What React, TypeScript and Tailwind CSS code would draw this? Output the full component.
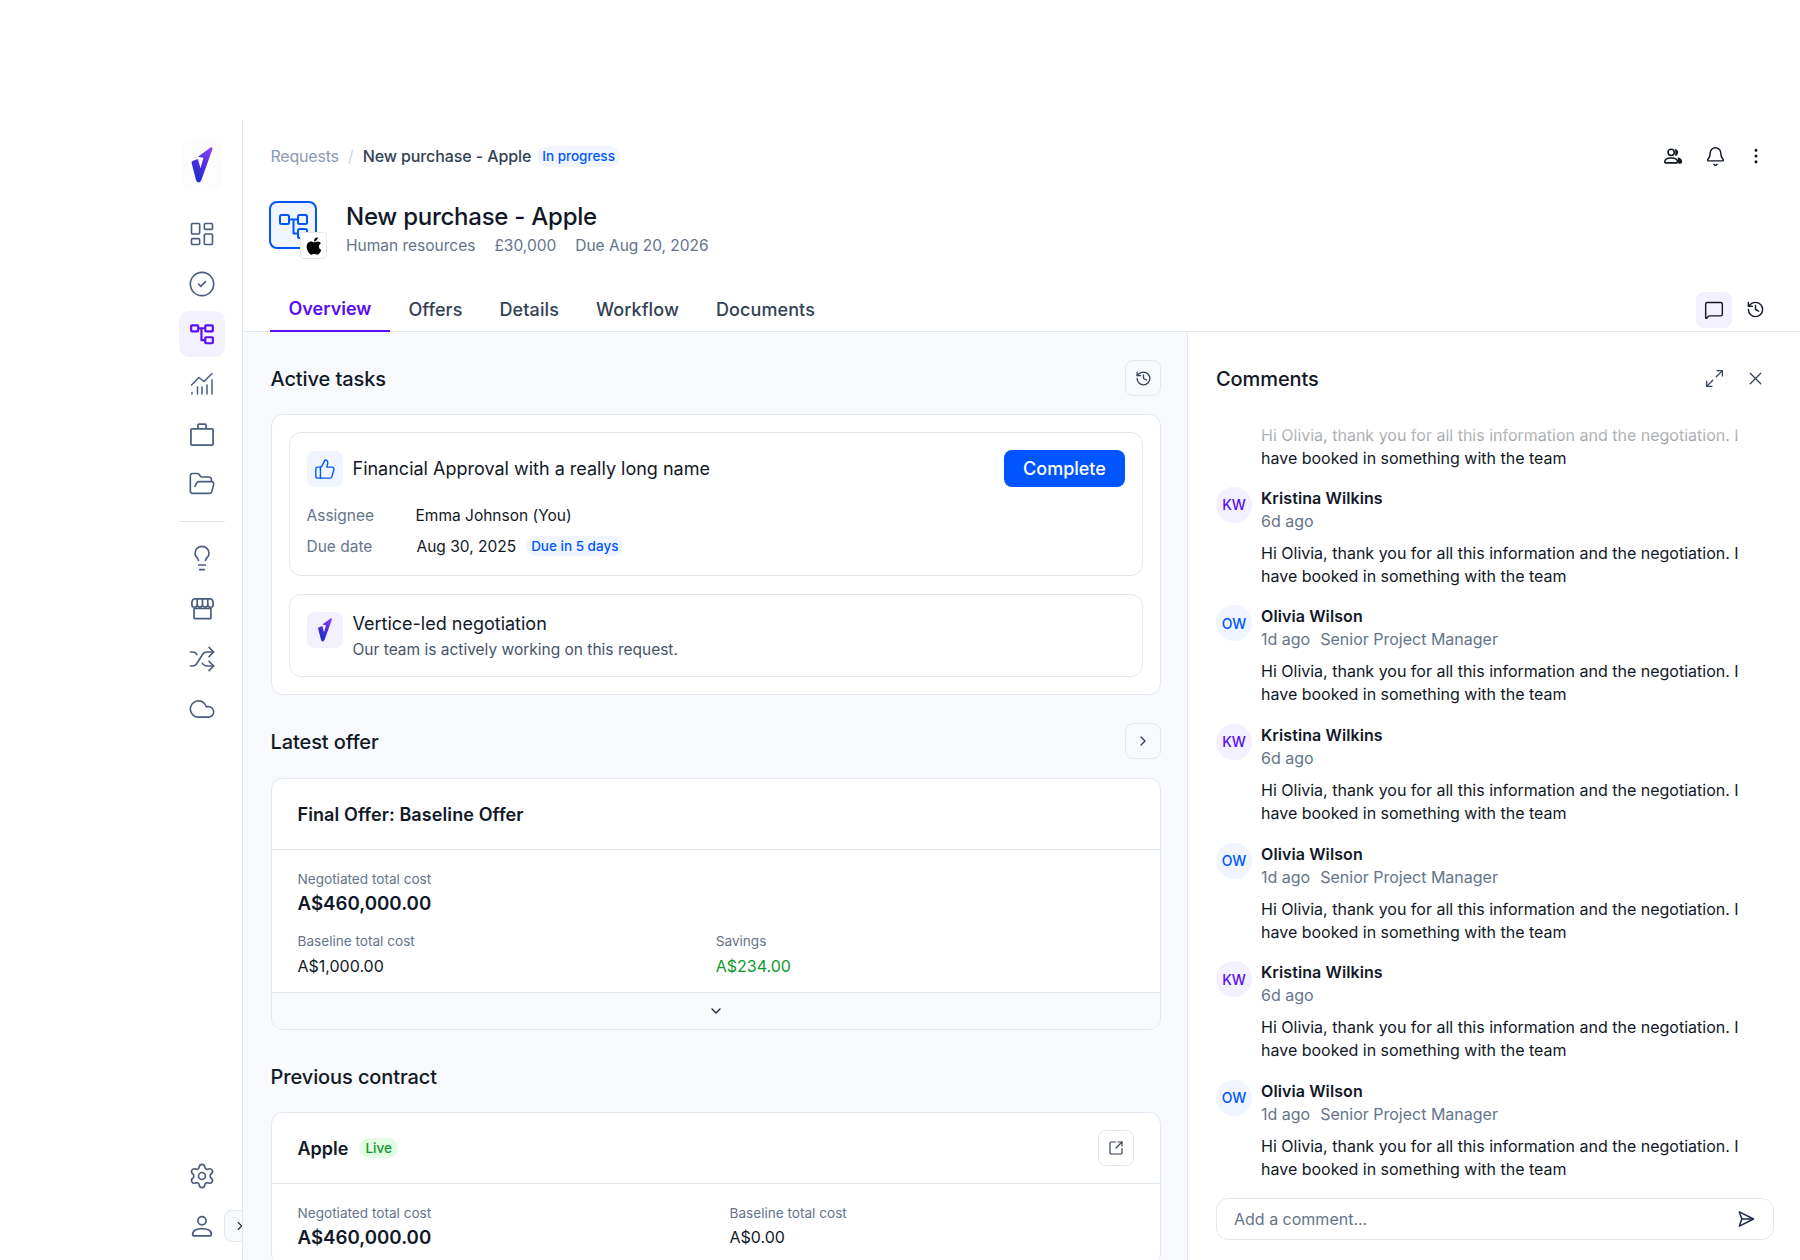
import type { ReactNode } from "react";
import {
  Bell,
  ChevronDown,
  ChevronRight,
  CircleCheck,
  Cloud,
  EllipsisVertical,
  FolderOpen,
  History,
  LayoutDashboard,
  Lightbulb,
  Maximize2,
  MessageSquare,
  Settings,
  Shuffle,
  SquareArrowOutUpRight,
  ThumbsUp,
  X,
} from "lucide-react";
import { FaApple } from "react-icons/fa";

function WorkflowIcon({ className }: { className?: string }) {
  return (
    <svg viewBox="0 0 24 24" fill="none" stroke="currentColor" strokeWidth="2" strokeLinejoin="round" className={className}>
      <rect x="2" y="4" width="6.5" height="5.5" rx="0.8" />
      <rect x="15" y="4" width="7" height="5.5" rx="0.8" />
      <rect x="15" y="15" width="7" height="5.5" rx="0.8" />
      <path d="M8.5 6.7H15M11.5 6.7V17.7H15" />
    </svg>
  );
}

function RequestIcon({ className }: { className?: string }) {
  return (
    <svg viewBox="0 0 30 28" fill="none" stroke="currentColor" strokeWidth="2" strokeLinejoin="round" className={className}>
      <rect x="1" y="2" width="9" height="9" rx="1.500" />
      <rect x="19" y="2" width="9" height="9" rx="1.500" />
      <rect x="19" y="16" width="9" height="9" rx="1.500" />
      <path d="M10 6.500H19M14.500 6.500V20.500H19" />
    </svg>
  );
}

function ChartIcon({ className }: { className?: string }) {
  return (
    <svg viewBox="0 0 24 24" fill="none" stroke="currentColor" strokeWidth="1.5" strokeLinecap="round" strokeLinejoin="round" className={className}>
      <path d="M1.500 13L9 5.500l5 4 8-8" />
      <path d="M2 22v-1.500M7.500 22v-7M12 22v-7M17 22v-9M22 22V8" />
    </svg>
  );
}

function CaseIcon({ className }: { className?: string }) {
  return (
    <svg viewBox="0 0 24 24" fill="none" stroke="currentColor" strokeWidth="1.5" strokeLinejoin="round" className={className}>
      <rect x="2.500" y="7.500" width="19" height="14" rx="1" />
      <path d="M8.500 7.500V4.500a1 1 0 0 1 1-1h5a1 1 0 0 1 1 1v3" />
    </svg>
  );
}

function ShopIcon({ className }: { className?: string }) {
  return (
    <svg viewBox="0 0 24 24" fill="none" stroke="currentColor" strokeWidth="1.5" strokeLinejoin="round" className={className}>
      <path d="M4.500 11.500V20.500a.5.5 0 0 0 .5.5h14a.5.5 0 0 0 .5-.5V11.500" />
      <path d="M5 3.500h14c1.500 0 2.500 2 2.500 5a2.400 2.400 0 0 1-4.800 0 2.350 2.350 0 0 1-4.700 0 2.350 2.350 0 0 1-4.700 0 2.400 2.400 0 0 1-4.800 0c0-3 1-5 2.500-5z" />
      <path d="M7.300 3.500v5M12 3.500v5M16.700 3.500v5M4.500 12h15" />
    </svg>
  );
}

function PersonIcon({ className }: { className?: string }) {
  return (
    <svg viewBox="0 0 24 24" fill="none" stroke="currentColor" strokeWidth="1.5" strokeLinejoin="round" className={className}>
      <circle cx="12" cy="7.500" r="3.500" />
      <path d="M4 19c0-3 3.500-4.800 8-4.800s8 1.800 8 4.800c0 1-.7 1.500-1.800 1.500H5.800C4.700 20.500 4 20 4 19z" />
    </svg>
  );
}

function PeopleIcon({ className }: { className?: string }) {
  return (
    <svg viewBox="0 0 24 24" fill="none" stroke="currentColor" strokeWidth="1.7" strokeLinejoin="round" className={className}>
      <circle cx="10" cy="8" r="3.400" />
      <path d="M3 18.500c0-2.800 3-4.300 7-4.300s7 1.500 7 4.300c0 .7-.5 1-1.200 1H4.200c-.7 0-1.200-.3-1.200-1z" />
      <path d="M14.500 4.800a3.400 3.400 0 0 1 0 6.400M18 14.500c2 .6 3.200 2 3.200 4 0 .7-.5 1-1.200 1h-1.500z" fill="currentColor" />
    </svg>
  );
}

function SendIcon({ className }: { className?: string }) {
  return (
    <svg viewBox="0 0 24 24" fill="none" stroke="currentColor" strokeWidth="1.8" strokeLinejoin="round" className={className}>
      <path d="M4 3.500L21 12 4 20.500 7 12z" />
      <path d="M7 12h14" />
    </svg>
  );
}

function Logo({ className, id }: { className?: string; id: string }) {
  return (
    <svg viewBox="0 0 65 110" className={className}>
      <defs>
        <linearGradient id={id} x1="0.8" y1="0" x2="0.3" y2="1">
          <stop offset="0" stopColor="#8b3ff5" />
          <stop offset="0.5" stopColor="#4a2fe0" />
          <stop offset="1" stopColor="#1a2fc4" />
        </linearGradient>
      </defs>
      <path
        d="M60 1Q66 0 64 8L30 102Q26 110 20 108Q16 106 14 100L1 50Q-1 44 5 42L20 37L28 65L37 33L20 30Z"
        fill={`url(#${id})`}
      />
    </svg>
  );
}

function NavItem({ children, active }: { children: ReactNode; active?: boolean }) {
  return (
    <div
      className={`flex h-[46px] w-[46px] items-center justify-center rounded-[10px] ${
        active ? "bg-[#f3f0ff] text-[#5a0ff0]" : "text-[#4a5d7c]"
      }`}
    >
      {children}
    </div>
  );
}

function Sidebar() {
  const icon = "h-[28px] w-[28px]";
  return (
    <aside className="relative flex h-full w-[64px] shrink-0 flex-col border-r border-[#e2e8f0] pr-[17px]">
      <div className="mx-auto mt-[19px] flex h-[52px] w-[40px] items-center justify-center rounded-xl bg-[#fcfcfd]">
        <Logo id="logo-main" className="h-[36px] w-[22px]" />
      </div>
      <nav className="mt-[20px] flex flex-col gap-[4px]">
        <NavItem><LayoutDashboard className={icon} strokeWidth={1.4} /></NavItem>
        <NavItem><CircleCheck className={icon} strokeWidth={1.4} /></NavItem>
        <NavItem active><WorkflowIcon className="h-[26px] w-[26px]" /></NavItem>
        <NavItem><ChartIcon className="h-[24px] w-[24px]" /></NavItem>
        <NavItem><CaseIcon className="h-[28px] w-[28px]" /></NavItem>
        <NavItem><FolderOpen className={icon} strokeWidth={1.4} /></NavItem>
      </nav>
      <div className="mt-[14px] mb-[13px] h-px bg-[#e2e8f0]" />
      <nav className="flex flex-col gap-[4.300px]">
        <NavItem><Lightbulb className={icon} strokeWidth={1.4} /></NavItem>
        <NavItem><ShopIcon className="h-[27px] w-[27px]" /></NavItem>
        <NavItem><Shuffle className={icon} strokeWidth={1.4} /></NavItem>
        <NavItem><Cloud className={icon} strokeWidth={1.4} /></NavItem>
      </nav>
      <nav className="mt-auto mb-[11px] flex flex-col gap-1">
        <NavItem><Settings className={icon} strokeWidth={1.4} /></NavItem>
        <NavItem><PersonIcon className={icon} /></NavItem>
      </nav>
      <div className="absolute right-0 bottom-[18px] flex h-[32px] w-[18px] items-center justify-end overflow-hidden rounded-l-lg border border-r-0 border-[#e2e8f0] bg-[#f8f9fc] text-[#1f2a44]">
        <ChevronRight className="mr-[-5px] h-[14px] w-[14px] shrink-0" />
      </div>
    </aside>
  );
}

function IconBox({ children, className = "" }: { children: ReactNode; className?: string }) {
  return (
    <div className={`flex h-9 w-9 items-center justify-center rounded-lg ${className}`}>{children}</div>
  );
}

function SectionHead({ title, children }: { title: string; children?: ReactNode }) {
  return (
    <div className="flex h-9 items-center justify-between">
      <h2 className="pt-[2px] text-[20px] font-medium tracking-[-0.1px] text-[#111827]">{title}</h2>
      {children && (
        <div className="flex h-9 w-9 items-center justify-center rounded-lg border border-[#e2e8f0] text-[#334155]">
          {children}
        </div>
      )}
    </div>
  );
}

function Metric({ label, value, strong, green }: { label: string; value: string; strong?: boolean; green?: boolean }) {
  return (
    <div>
      <div className="text-[13.600px] leading-[20px] text-[#64748b]">{label}</div>
      <div
        className={
          strong
            ? "pt-[1px] text-[18.700px] leading-[27px] font-semibold text-[#111827]"
            : `mt-[3px] text-[16px] leading-[24px] ${green ? "text-[#0a9a2a]" : "text-[#111827]"}`
        }
      >
        {value}
      </div>
    </div>
  );
}

function TasksPanel() {
  return (
    <div className="h-full w-[945px] shrink-0 overflow-hidden border-r border-[#e2e8f0] bg-[#f8f9fc] pt-[28px] pr-[26px] pl-[27.500px]">
      <SectionHead title="Active tasks">
        <History className="h-[17px] w-[17px]" strokeWidth={1.8} />
      </SectionHead>
      <div className="mt-[18px] flex flex-col gap-[18px] rounded-xl border border-[#e2e8f0] bg-white p-[17px]">
        <div className="h-[144px] rounded-xl border border-[#e2e8f0] px-[17px] pt-[17px]">
          <div className="flex items-center">
            <IconBox className="bg-[#f0f5ff] text-[#0055ff]">
              <ThumbsUp className="h-[22px] w-[22px]" strokeWidth={1.5} />
            </IconBox>
            <span className="ml-[10px] text-[18px] text-[#111827]">Financial Approval with a really long name</span>
            <button className="ml-auto h-[37px] w-[121px] rounded-lg bg-[#0055ff] text-[18px] font-medium text-white">
              Complete
            </button>
          </div>
          <div className="mt-[17px] flex h-[24px] items-center text-[15.500px]">
            <span className="w-[109px] text-[#64748b]">Assignee</span>
            <span className="text-[#111827]">Emma Johnson (You)</span>
          </div>
          <div className="mt-[6.500px] flex h-[24px] items-center text-[15.500px]">
            <span className="w-[110px] text-[#64748b]">Due date</span>
            <span className="text-[#111827]">Aug 30, 2025</span>
            <span className="mb-[2px] ml-[10px] rounded-full bg-[#f0f5ff] px-[5px] text-[13.500px] leading-[20px] font-medium text-[#0055ff]">
              Due in 5 days
            </span>
          </div>
        </div>
        <div className="flex h-[83px] rounded-xl border border-[#e2e8f0] px-[17px] pt-[17px]">
          <IconBox className="bg-[#f3f0ff]">
            <Logo id="logo-task" className="h-[24px] w-[14px]" />
          </IconBox>
          <div className="ml-[10px]">
            <div className="text-[18px] leading-[24px] text-[#111827]">Vertice-led negotiation</div>
            <div className="mt-[2px] text-[15.500px] leading-[24px] text-[#475569]">Our team is actively working on this request.</div>
          </div>
        </div>
      </div>

      <div className="mt-[28px]">
        <SectionHead title="Latest offer">
          <ChevronRight className="h-4 w-4" />
        </SectionHead>
      </div>
      <div className="mt-[19px] overflow-hidden rounded-xl border border-[#e2e8f0] bg-white">
        <div className="flex h-[71px] items-center border-b border-[#e2e8f0] px-[26px] text-[18px] font-semibold tracking-[0.1px] text-[#111827]">
          Final Offer: Baseline Offer
        </div>
        <div className="px-[26px] pt-[19px] pb-[14px]">
          <Metric label="Negotiated total cost" value="A$460,000.00" strong />
          <div className="mt-[14px] grid grid-cols-2">
            <Metric label="Baseline total cost" value="A$1,000.00" />
            <Metric label="Savings" value="A$234.00" green />
          </div>
        </div>
        <div className="flex h-[37px] items-center justify-center border-t border-[#e2e8f0] bg-[#f8f9fc] text-[#1f2a44]">
          <ChevronDown className="h-4 w-4" />
        </div>
      </div>

      <div className="mt-[28px]">
        <SectionHead title="Previous contract" />
      </div>
      <div className="mt-[18px] rounded-xl border border-[#e2e8f0] bg-white">
        <div className="flex h-[71px] items-center border-b border-[#e2e8f0] px-[26px]">
          <span className="text-[18px] font-semibold text-[#111827]">Apple</span>
          <span className="ml-[11px] rounded-full bg-[#e2fbe2] px-[6px] text-[13.500px] leading-[20px] font-medium text-[#0a9a2a]">
            Live
          </span>
          <div className="ml-auto flex h-9 w-9 items-center justify-center rounded-lg border border-[#e2e8f0] text-[#334155]">
            <SquareArrowOutUpRight className="h-4 w-4" strokeWidth={1.8} />
          </div>
        </div>
        <div className="grid grid-cols-[432px_1fr] px-[26px] pt-[19px] pb-[14px]">
          <Metric label="Negotiated total cost" value="A$460,000.00" strong />
          <div>
            <div className="text-[13.600px] leading-[20px] text-[#64748b]">Baseline total cost</div>
            <div className="text-[16px] leading-[28px] text-[#111827]">A$0.00</div>
          </div>
        </div>
      </div>
    </div>
  );
}

const BODY_TEXT = "Hi Olivia, thank you for all this information and the negotiation. I have booked in something with the team";

const comments = [
  { initials: "KW", name: "Kristina Wilkins", age: "6d ago", role: "" },
  { initials: "OW", name: "Olivia Wilson", age: "1d ago", role: "Senior Project Manager" },
  { initials: "KW", name: "Kristina Wilkins", age: "6d ago", role: "" },
  { initials: "OW", name: "Olivia Wilson", age: "1d ago", role: "Senior Project Manager" },
  { initials: "KW", name: "Kristina Wilkins", age: "6d ago", role: "" },
  { initials: "OW", name: "Olivia Wilson", age: "1d ago", role: "Senior Project Manager" },
];

function CommentsPanel() {
  return (
    <div className="flex h-full min-w-0 flex-1 flex-col bg-white pr-[26px] pl-[28px]">
      <div className="flex h-[92px] shrink-0 items-center justify-between">
        <h2 className="pt-[1px] text-[20px] font-medium tracking-[-0.1px] text-[#111827]">Comments</h2>
        <div className="flex items-center gap-[20px] pr-[8.500px] text-[#334155]">
          <Maximize2 className="h-[21px] w-[21px]" strokeWidth={1.5} />
          <X className="h-[21px] w-[21px]" strokeWidth={1.5} />
        </div>
      </div>
      <div className="relative flex flex-col gap-[17.700px]">
        <p className="mb-[-1.200px] ml-[45px] w-[490px] text-[16px] leading-[23px] text-[#111827]">{BODY_TEXT}</p>
        <div className="absolute top-0 left-0 h-[24px] w-full bg-gradient-to-b from-white/80 to-white/50" />
        {comments.map((c, i) => (
          <div key={i} className="flex gap-[9px]">
            <div
              className={`flex h-9 w-9 shrink-0 items-center justify-center rounded-full text-[14px] font-medium ${
                c.initials === "KW" ? "bg-[#f3f0ff] text-[#5a0ff0]" : "bg-[#f0f5ff] text-[#0055ff]"
              }`}
            >
              {c.initials}
            </div>
            <div className="w-[490px]">
              <div className="text-[16px] leading-[23px] font-semibold tracking-[0.1px] text-[#111827]">{c.name}</div>
              <div className="flex gap-[10px] text-[16px] leading-[23px] text-[#64748b]">
                <span>{c.age}</span>
                {c.role && <span>{c.role}</span>}
              </div>
              <p className="mt-[9px] text-[16px] leading-[23px] text-[#111827]">{BODY_TEXT}</p>
            </div>
          </div>
        ))}
      </div>
      <div className="mt-auto mb-[20px] flex h-[42px] w-[558px] shrink-0 items-center justify-between rounded-xl border border-[#e2e8f0] pr-[17px] pl-[17px]">
        <span className="text-[16px] text-[#64748b]">Add a comment...</span>
        <SendIcon className="h-[20px] w-[20px] text-[#1e2b4a]" />
      </div>
    </div>
  );
}

export default function App() {
  const tabs = ["Overview", "Offers", "Details", "Workflow", "Documents"];
  return (
    <div className="flex h-[1260px] w-[1800px] overflow-hidden bg-white pt-[120px] pl-[179px] font-[Inter,sans-serif]">
      <Sidebar />
      <main className="flex h-full min-w-0 flex-1 flex-col">
        <header className="shrink-0 border-b border-[#e2e8f0]">
          <div className="mt-[24px] flex h-[24px] items-center pr-[26px] pl-[27.500px] text-[16px]">
            <span className="tracking-[-0.2px] text-[#8a9ab3]">Requests</span>
            <span className="mx-[9px] text-[#cbd5e1]">/</span>
            <span className="font-medium tracking-[-0.1px] text-[#334155]">New purchase - Apple</span>
            <span className="ml-[6px] rounded-full bg-[#f0f5ff] px-[5px] text-[13.500px] leading-[21px] font-medium text-[#0055ff]">
              In progress
            </span>
            <div className="ml-auto flex items-center gap-[5px] text-[#111827]">
              <div className="mr-[1px] flex h-9 w-9 items-center justify-center"><PeopleIcon className="h-[22px] w-[22px]" /></div>
              <div className="flex h-9 w-9 items-center justify-center"><Bell className="h-[21px] w-[21px]" strokeWidth={1.7} /></div>
              <div className="flex h-9 w-9 items-center justify-center"><EllipsisVertical className="h-5 w-5" strokeWidth={1.7} /></div>
            </div>
          </div>
          <div className="mt-[33px] flex h-[56px] pl-[26px]">
            <div className="relative h-[48px] w-[48px] shrink-0">
              <div className="flex h-[48px] w-[48px] items-center justify-center rounded-lg border-2 border-[#0055ff] bg-[#f0f5ff] pt-[4px] pl-[2px] text-[#0055ff]">
                <RequestIcon className="h-[28px] w-[30px]" />
              </div>
              <div className="absolute top-[31px] left-[31px] flex h-[27px] w-[27px] items-center justify-center rounded border border-[#e2e8f0] bg-white text-black">
                <FaApple className="h-[20px] w-[20px]" />
              </div>
            </div>
            <div className="ml-[29px]">
              <h1 className="text-[24px] leading-[32px] font-medium tracking-[-0.25px] text-[#111827]">New purchase - Apple</h1>
              <div className="flex gap-[19px] text-[15.500px] leading-[25px] text-[#64748b]">
                <span>Human resources</span>
                <span>£30,000</span>
                <span>Due Aug 20, 2026</span>
              </div>
            </div>
          </div>
          <div className="mt-[31px] flex h-[43px] items-end pr-[27px] pl-[27px]">
            {tabs.map((t, i) => (
              <div
                key={t}
                className={`mb-[-1px] flex h-[43px] items-center px-[18.500px] pb-[3px] text-[18px] ${
                  i === 0
                    ? "border-b-2 border-[#5a0ff0] pb-[1px] font-semibold text-[#5a0ff0]"
                    : "font-medium tracking-[0.1px] text-[#334155]"
                }`}
              >
                {t}
              </div>
            ))}
            <div className="ml-auto flex items-center gap-[5px] self-center text-[#111827]">
              <div className="flex h-9 w-9 items-center justify-center rounded-lg bg-[#f3f0ff]">
                <MessageSquare className="h-5 w-5" strokeWidth={1.7} />
              </div>
              <div className="flex h-9 w-9 items-center justify-center">
                <History className="h-[19px] w-[19px]" strokeWidth={1.8} />
              </div>
            </div>
          </div>
        </header>
        <div className="flex min-h-0 flex-1">
          <TasksPanel />
          <CommentsPanel />
        </div>
      </main>
    </div>
  );
}
